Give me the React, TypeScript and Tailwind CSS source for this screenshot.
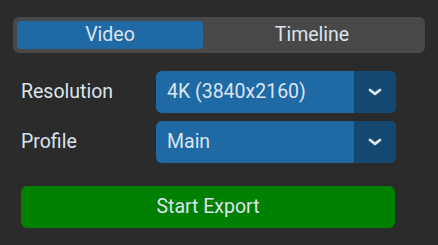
import { useState } from 'react'

function Chevron() {
  return (
    <svg width="14" height="10" viewBox="0 0 14 10" className="text-[#dce4ee]">
      <polyline points="2,3 7,6.8 12,3" fill="none" stroke="currentColor" strokeWidth="2.8" strokeLinecap="round" strokeLinejoin="round" />
    </svg>
  )
}

function Dropdown({ value }: { value: string }) {
  return (
    <div className="flex h-[42px] w-[240px] overflow-hidden rounded-[6px] bg-[#1f6aa5]">
      <div className="flex flex-1 items-center pl-[11px] text-[19.5px] text-[#dce4ee]">{value}</div>
      <div className="flex w-[42px] items-center justify-center bg-[#144870]">
        <Chevron />
      </div>
    </div>
  )
}

export default function App() {
  const [tab, setTab] = useState('Video')
  return (
    <div
      className="h-[245px] w-[438px] overflow-hidden bg-[#2b2b2b] text-[#dce4ee]"
      style={{ fontFamily: 'Roboto, "Liberation Sans", sans-serif' }}
    >
      <div className="ml-[13px] mt-[17px] flex h-[36px] w-[412px] rounded-[6px] bg-[#484848] p-[4px]">
        {['Video', 'Timeline'].map((t, i) => (
          <button
            key={t}
            type="button"
            onClick={() => setTab(t)}
            className={
              (i === 0 ? 'w-[186px] ' : 'flex-1 ') +
              (tab === t
                ? 'rounded-[4px] bg-[#1f6aa5] text-[19.5px] leading-none text-[#dce4ee]'
                : 'rounded-[4px] text-[19.5px] leading-none text-[#dce4ee]')
            }
          >
            {t}
          </button>
        ))}
      </div>

      <div className="mt-[18px] flex flex-col gap-[8px] px-[21px]">
        <div className="flex items-center">
          <div className="w-[135px] text-[19.5px]">Resolution</div>
          <Dropdown value="4K (3840x2160)" />
        </div>
        <div className="flex items-center">
          <div className="w-[135px] text-[19.5px]">Profile</div>
          <Dropdown value="Main" />
        </div>
        <button
          type="button"
          className="mt-[15px] h-[42px] w-[374px] rounded-[6px] bg-[#008000] text-[19.5px] text-[#dce4ee]"
        >
          Start Export
        </button>
      </div>
    </div>
  )
}
